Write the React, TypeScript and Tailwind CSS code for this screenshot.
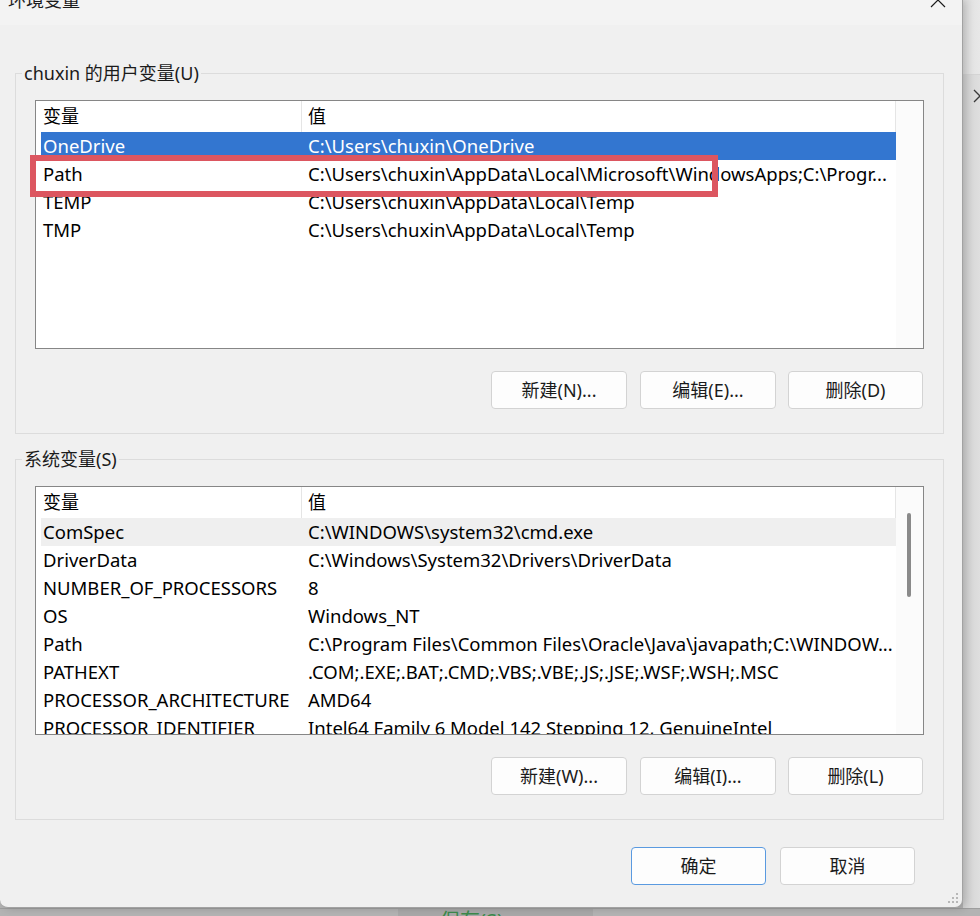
import { JSX } from 'react';

type Row = { name: string; value: string; state?: 'selected' | 'hover' };

const userVars: Row[] = [
  { name: 'OneDrive', value: 'C:\\Users\\chuxin\\OneDrive', state: 'selected' },
  { name: 'Path', value: 'C:\\Users\\chuxin\\AppData\\Local\\Microsoft\\WindowsApps;C:\\Progr...' },
  { name: 'TEMP', value: 'C:\\Users\\chuxin\\AppData\\Local\\Temp' },
  { name: 'TMP', value: 'C:\\Users\\chuxin\\AppData\\Local\\Temp' },
];

const systemVars: Row[] = [
  { name: 'ComSpec', value: 'C:\\WINDOWS\\system32\\cmd.exe', state: 'hover' },
  { name: 'DriverData', value: 'C:\\Windows\\System32\\Drivers\\DriverData' },
  { name: 'NUMBER_OF_PROCESSORS', value: '8' },
  { name: 'OS', value: 'Windows_NT' },
  { name: 'Path', value: 'C:\\Program Files\\Common Files\\Oracle\\Java\\javapath;C:\\WINDOW...' },
  { name: 'PATHEXT', value: '.COM;.EXE;.BAT;.CMD;.VBS;.VBE;.JS;.JSE;.WSF;.WSH;.MSC' },
  { name: 'PROCESSOR_ARCHITECTURE', value: 'AMD64' },
  { name: 'PROCESSOR_IDENTIFIER', value: 'Intel64 Family 6 Model 142 Stepping 12, GenuineIntel' },
];

function Button({ label, width, focused }: { label: string; width: string; focused?: boolean }) {
  return (
    <button
      className={
        focused
          ? `${width} h-[38px] rounded-[4px] border border-[#5a9ae0] bg-[#fdfdfd] text-[18px] text-[#1b1b1b]`
          : `${width} h-[38px] rounded-[4px] border border-[#d3d3d3] bg-[#fdfdfd] text-[18px] text-[#1b1b1b]`
      }
    >
      {label}
    </button>
  );
}

function VarList({ rows, scroll }: { rows: Row[]; scroll?: boolean }) {
  return (
    <div className="ml-[19px] flex h-[249px] w-[889px] overflow-hidden border border-[#868686] bg-white">
      <div className="w-[860px]">
        <div className="flex h-[31px] items-center text-[18px] text-black">
          <div className="h-full w-[266px] border-r border-[#e5e5e5] pl-[7px] leading-[31px]">变量</div>
          <div className="h-full w-[594px] border-r border-[#e5e5e5] pl-[6px] leading-[31px]">值</div>
        </div>
        {rows.map((row) => (
          <div
            key={row.name}
            className={
              row.state === 'selected'
                ? 'ml-[5px] flex h-[28px] w-[855px] whitespace-nowrap bg-[#3376d0] text-[18.5px] leading-[28px] text-white'
                : row.state === 'hover'
                  ? 'ml-[5px] flex h-[28px] w-[855px] whitespace-nowrap bg-[#efefef] text-[18.5px] leading-[28px] text-black'
                  : 'ml-[5px] flex h-[28px] w-[855px] whitespace-nowrap text-[18.5px] leading-[28px] text-black'
            }
          >
            <div className="w-[267px] shrink-0 pl-[2px]">{row.name}</div>
            <div>{row.value}</div>
          </div>
        ))}
      </div>
      <div className="w-[27px] bg-[#fbfbfb]">
        {scroll && <div className="ml-[11px] mt-[26px] h-[84px] w-[4px] rounded-full bg-[#8a8a8a]" />}
      </div>
    </div>
  );
}

function Group({
  label,
  rows,
  scroll,
  buttons,
}: {
  label: string;
  rows: Row[];
  scroll?: boolean;
  buttons: string[];
}) {
  return (
    <div className="ml-[15px] h-[361px] w-[929px] border border-[#dcdcdc]">
      <div className="-mt-[13px] ml-[6px] w-fit bg-[#f0f0f0] px-[2px] text-[18px] leading-[24px] text-[#1b1b1b]">
        {label}
      </div>
      <div className="mt-[15px]">
        <VarList rows={rows} scroll={scroll} />
      </div>
      <div className="mt-[22px] flex justify-end pr-[20px]">
        <Button label={buttons[0]} width="w-[136px]" />
        <div className="ml-[13px]">
          <Button label={buttons[1]} width="w-[136px]" />
        </div>
        <div className="ml-[12px]">
          <Button label={buttons[2]} width="w-[135px]" />
        </div>
      </div>
    </div>
  );
}

export default function App(): JSX.Element {
  return (
    <div className="relative h-[916px] w-[980px] overflow-hidden bg-[#b3b3b3] font-['Noto_Sans','Noto_Sans_CJK_SC',sans-serif]">
      <div className="flex h-[908px]">
        {/* dialog */}
        <div className="relative h-[908px] w-[963px] shrink-0 rounded-b-[8px] border-r border-b border-[#a2a2a2] bg-[#f0f0f0] shadow-[3px_0_8px_rgba(0,0,0,0.18)]">
          <div className="flex h-[25px] items-start bg-[#f3f3f3]">
            <div className="ml-[8px] -mt-[12px] text-[18px] leading-[24px] text-[#1b1b1b]">环境变量</div>
            <svg className="ml-auto mr-[16px] -mt-[8px]" width="16" height="16" viewBox="0 0 16 16">
              <path d="M1 1 L15 15 M15 1 L1 15" stroke="#1b1b1b" strokeWidth="1.2" fill="none" />
            </svg>
          </div>

          <div className="mt-[48px]">
            <Group
              label="chuxin 的用户变量(U)"
              rows={userVars}
              buttons={['新建(N)...', '编辑(E)...', '删除(D)']}
            />
          </div>

          <div className="mt-[25px]">
            <Group
              label="系统变量(S)"
              rows={systemVars}
              scroll
              buttons={['新建(W)...', '编辑(I)...', '删除(L)']}
            />
          </div>

          <div className="mt-[27px] flex justify-end pr-[47px]">
            <Button label="确定" width="w-[135px]" focused />
            <div className="ml-[14px]">
              <Button label="取消" width="w-[135px]" />
            </div>
          </div>

          {/* resize grip */}
          <svg className="absolute bottom-[3px] right-[3px]" width="12" height="12" viewBox="0 0 12 12">
            <rect x="9" y="1" width="2" height="2" fill="#b8b8b8" />
            <rect x="5" y="5" width="2" height="2" fill="#b8b8b8" />
            <rect x="9" y="5" width="2" height="2" fill="#b8b8b8" />
            <rect x="1" y="9" width="2" height="2" fill="#b8b8b8" />
            <rect x="5" y="9" width="2" height="2" fill="#b8b8b8" />
            <rect x="9" y="9" width="2" height="2" fill="#b8b8b8" />
          </svg>

          {/* highlight drawn over the Path row */}
          <div className="absolute left-[30px] top-[155px] h-[42px] w-[688px] border-[6px] border-[#dc5660]" />
        </div>

        {/* window behind */}
        <div className="flex flex-1 flex-col bg-gradient-to-r from-[#d2d2d2] to-[#e4e4e4]">
          <div className="h-[75px] border-b border-[#d4d4d4] bg-gradient-to-r from-[#dedede] to-[#ececec]" />
          <svg className="ml-[10px] mt-[14px]" width="14" height="14" viewBox="0 0 14 14">
            <path d="M1 1 L13 13 M13 1 L1 13" stroke="#3a3a3a" strokeWidth="1.3" fill="none" />
          </svg>
        </div>
      </div>

      <div className="flex h-[8px] border-t border-[#9e9e9e]">
        <div className="ml-[398px] w-[195px] overflow-hidden bg-[#a8a8a8]">
          <div className="ml-[42px] text-[20px] leading-[24px] text-[#3b8a4b]">保存(S)</div>
        </div>
      </div>
    </div>
  );
}
